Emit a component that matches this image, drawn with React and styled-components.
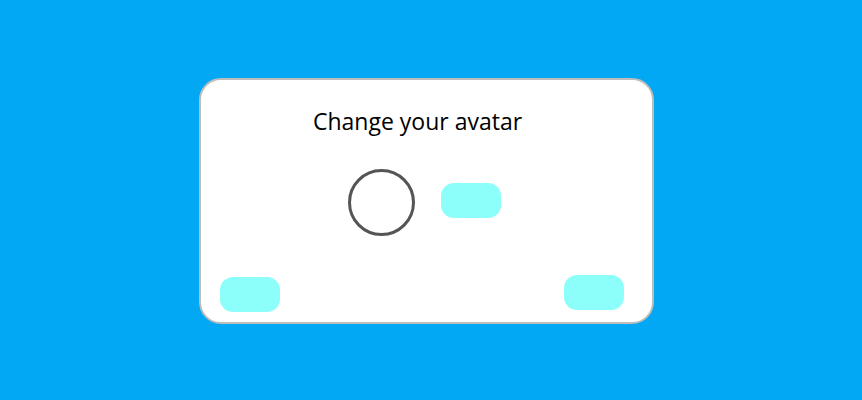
import React from 'react';
import styled, { createGlobalStyle } from 'styled-components';

const GlobalStyle = createGlobalStyle`
  html, body {
    margin: 0;
    padding: 0;
    background: #02a8f3;
    font-family: 'Open Sans', 'Noto Sans', sans-serif;
  }
`;

const Page = styled.div`
  width: 862px;
  height: 400px;
  display: flex;
  align-items: flex-start;
  padding: 78px 0 0 199px;
  box-sizing: border-box;
`;

const Card = styled.div`
  width: 455px;
  height: 246px;
  box-sizing: border-box;
  background: #fff;
  border: 2px solid #bdbdbd;
  border-radius: 22px;
  display: flex;
  flex-direction: column;
  padding: 25px 28px 10px 19px;
`;

const Title = styled.h2`
  margin: 0;
  padding-right: 9px;
  font-size: 23px;
  font-weight: 400;
  line-height: 32px;
  color: #000;
  text-align: center;
`;

const AvatarRow = styled.div`
  display: flex;
  align-items: center;
  justify-content: center;
  gap: 26px;
  margin-top: 32px;
  padding-left: 4px;
`;

const Avatar = styled.div`
  width: 61px;
  height: 61px;
  border: 3px solid #555;
  border-radius: 50%;
`;

const Pill = styled.button`
  width: 60px;
  height: 35px;
  border: none;
  padding: 0;
  border-radius: 13px;
  background: #8cfffb;
  margin-bottom: ${({ lift }) => lift || 0}px;
`;

const Footer = styled.div`
  margin-top: auto;
  display: flex;
  justify-content: space-between;
  align-items: flex-end;
`;

export default function App() {
  return (
    <>
      <GlobalStyle />
      <Page>
        <Card>
          <Title>Change your avatar</Title>
          <AvatarRow>
            <Avatar />
            <Pill lift={5} />
          </AvatarRow>
          <Footer>
            <Pill />
            <Pill lift={2} />
          </Footer>
        </Card>
      </Page>
    </>
  );
}
